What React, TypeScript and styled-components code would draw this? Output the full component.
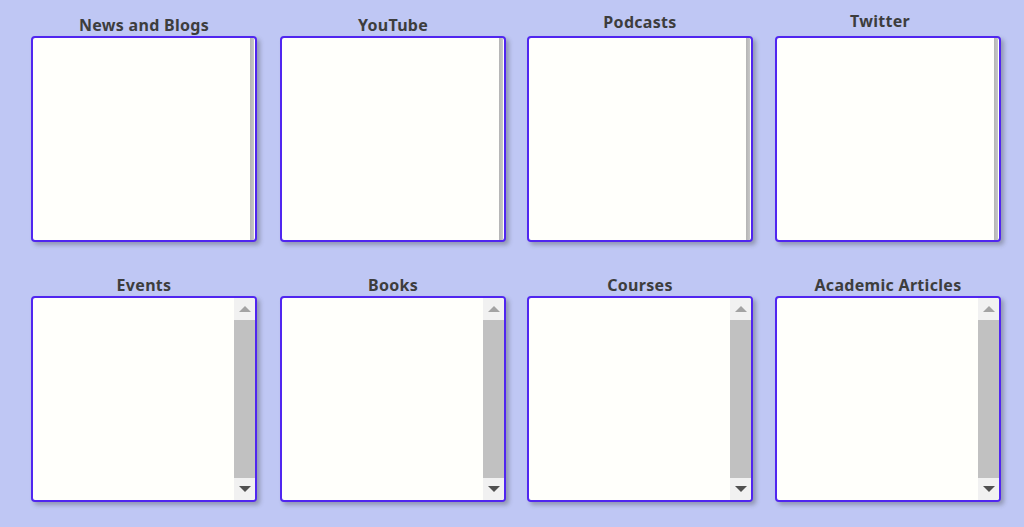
import React, { FC } from 'react';
import styled, { createGlobalStyle } from 'styled-components';

const GlobalStyle = createGlobalStyle`
    html, body {
        margin: 0;
        padding: 0;
        background: #bfc7f4;
    }

    body {
        font-family: 'Noto Sans', 'Open Sans', sans-serif;
    }
`;

const Page = styled.div`
    box-sizing: border-box;
    width: 1024px;
    height: 527px;
    padding: 13px 0 0 31px;
    display: grid;
    grid-template-columns: repeat(4, 226px);
    grid-auto-rows: 229px;
    column-gap: 22px;
    row-gap: 31px;
`;

const Cell = styled.section<{ $shift?: number }>`
    display: flex;
    flex-direction: column;
    align-items: center;
    margin-left: ${({ $shift }) => $shift || 0}px;
`;

const Title = styled.h2<{ $lift?: number; $nudge?: number }>`
    margin: 0;
    height: 23px;
    line-height: 24px;
    font-size: 16px;
    font-weight: 700;
    color: #3d3d3d;
    letter-spacing: 0.3px;
    transform: translate(${({ $nudge }) => $nudge || 0}px, ${({ $lift }) => -($lift || 0)}px);
`;

const Card = styled.div`
    box-sizing: border-box;
    width: 226px;
    height: 206px;
    display: flex;
    justify-content: flex-end;
    background: #fffffb;
    border: 2px solid #5026f0;
    border-radius: 4px;
    box-shadow: 3px 3px 4px rgba(60, 60, 60, 0.35);
    overflow: hidden;
`;

const Strip = styled.div`
    width: 4px;
    margin-right: 1px;
    background: linear-gradient(to right, #b4b4b4, #c8c8c8);
`;

const Scrollbar = styled.div`
    width: 21px;
    display: flex;
    flex-direction: column;
    background: #f1f1f1;
`;

const Arrow = styled.div<{ $down?: boolean }>`
    height: 22px;
    display: flex;
    align-items: center;
    justify-content: center;

    &::before {
        content: '';
        border-left: 6px solid transparent;
        border-right: 6px solid transparent;
        ${({ $down }) =>
            $down ? 'border-top: 6px solid #505050;' : 'border-bottom: 6px solid #a3a3a3;'}
    }
`;

const Thumb = styled.div`
    flex: 1;
    background: #c1c1c1;
`;

interface FeedProps {
    title: string;
    lift?: number;
    nudge?: number;
    shift?: number;
    scroll?: boolean;
}

const Feed: FC<FeedProps> = ({ title, lift, nudge, shift, scroll }) => (
    <Cell $shift={shift}>
        <Title $lift={lift} $nudge={nudge}>
            {title}
        </Title>
        <Card>
            {scroll ? (
                <Scrollbar>
                    <Arrow />
                    <Thumb />
                    <Arrow $down />
                </Scrollbar>
            ) : (
                <Strip />
            )}
        </Card>
    </Cell>
);

const App: FC = () => (
    <>
        <GlobalStyle />
        <Page>
            <Feed title="News and Blogs" />
            <Feed title="YouTube" shift={2} />
            <Feed title="Podcasts" lift={3} />
            <Feed title="Twitter" lift={4} nudge={-8} />
            <Feed title="Events" scroll />
            <Feed title="Books" shift={2} scroll />
            <Feed title="Courses" scroll />
            <Feed title="Academic Articles" scroll />
        </Page>
    </>
);

export default App;
